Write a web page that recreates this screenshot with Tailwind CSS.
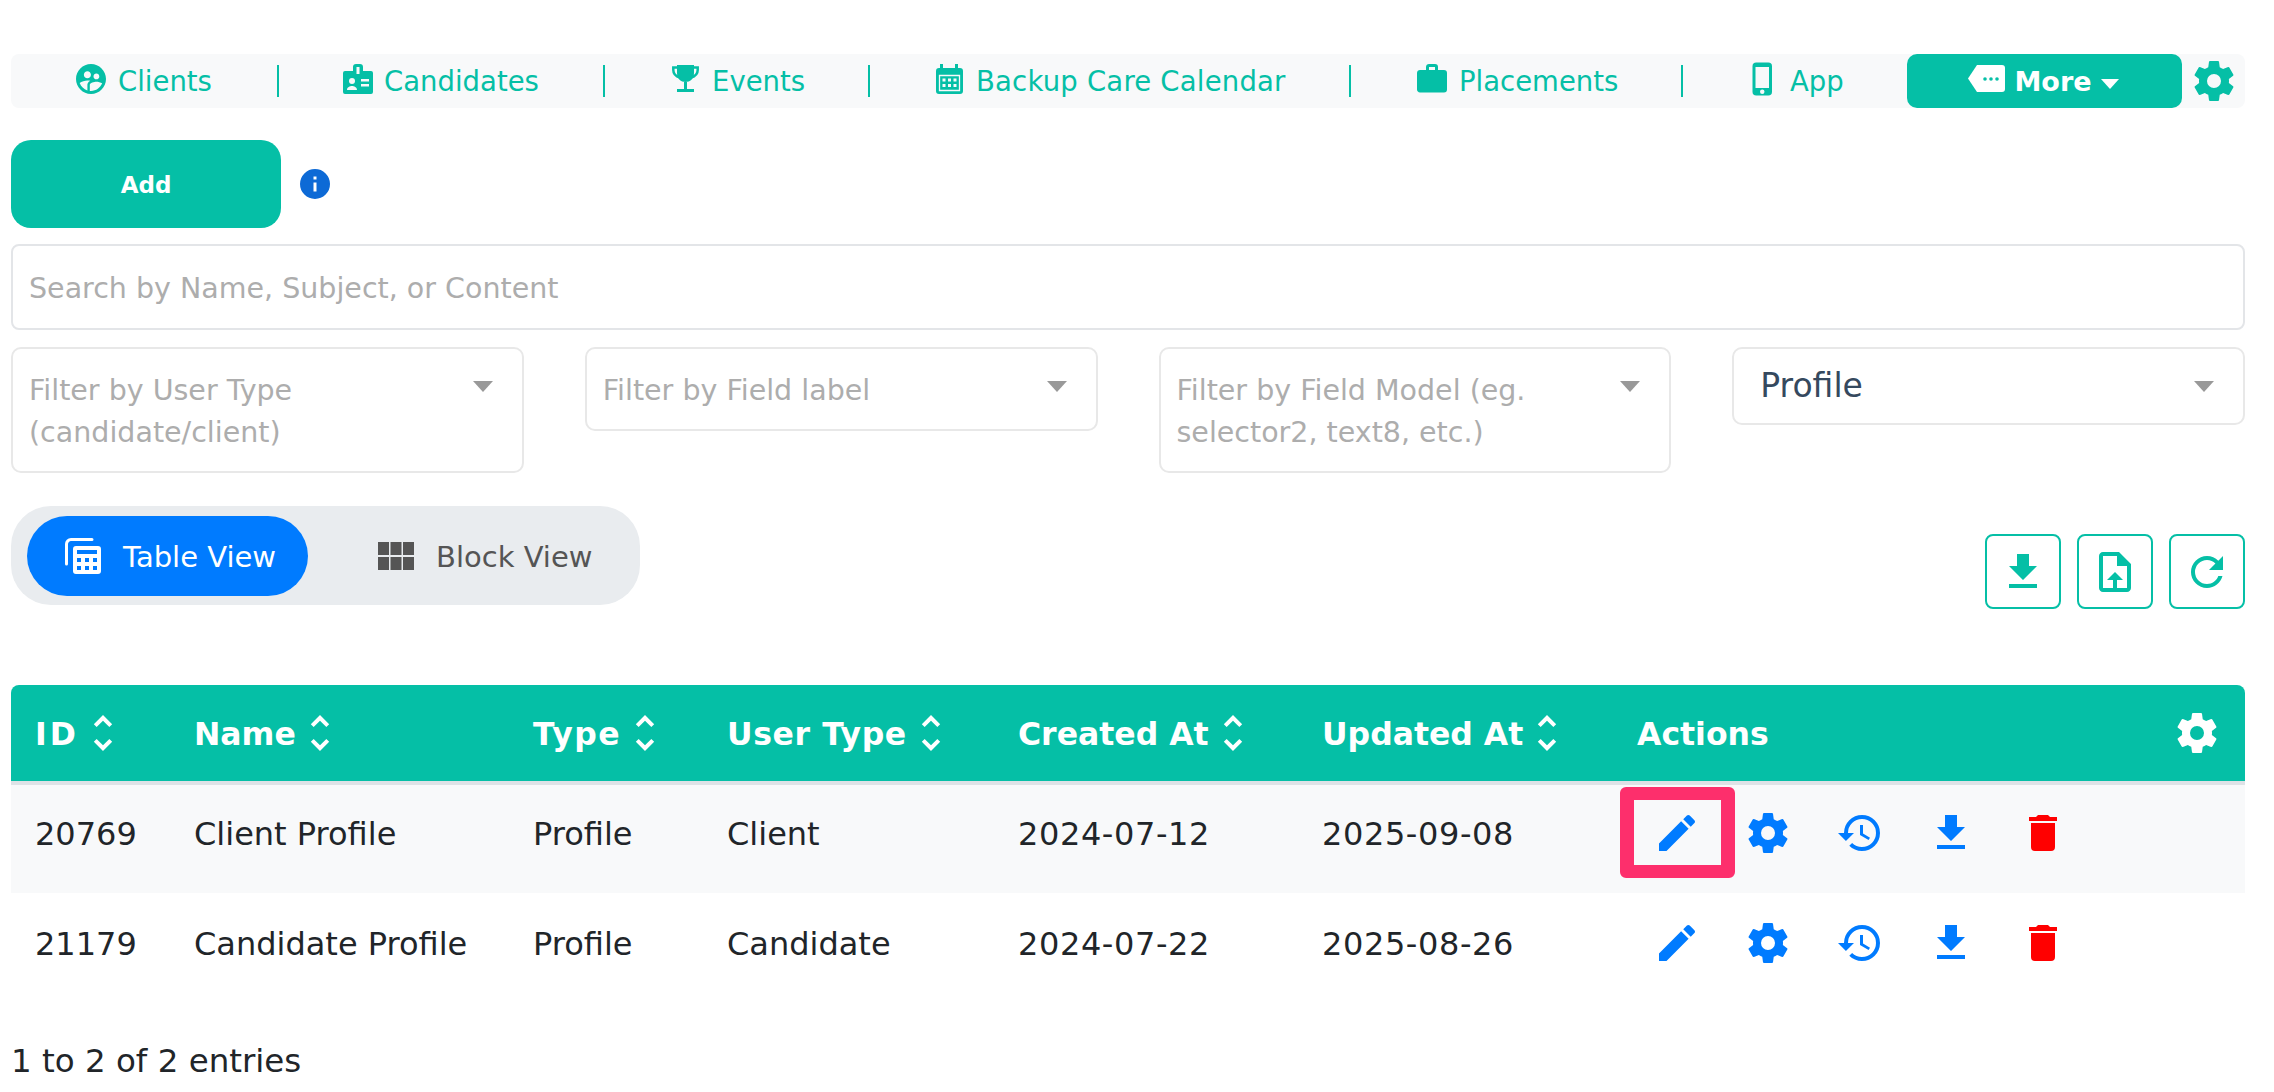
<!DOCTYPE html>
<html lang="en">
<head>
    <meta charset="UTF-8">
    <meta name="viewport" content="width=device-width, initial-scale=1.0">
    <title>Custom Fields</title>
    <script src="https://cdn.jsdelivr.net/npm/@tailwindcss/browser@4"></script>
</head>
<body class="bg-white font-['DejaVu_Sans',sans-serif] text-[#212529] overflow-hidden">
<div class="pt-[54px] pl-[11px] pr-[29px]">

    <!-- Top nav -->
    <nav class="flex items-center h-[54px] bg-[#f8f9fa] rounded-lg text-[#05bfa6] text-[27.500px]">
        <a class="flex items-center gap-[9px] w-[268px] h-[32px] pl-[62px] border-r-2 border-[#05bfa6]">
            <svg class="w-[36px] h-[36px] -mt-[4px] fill-current" viewBox="0 0 24 24"><path d="M12,2C6.47,2 2,6.5 2,12C2,17.5 6.5,22 12,22C17.5,22 22,17.5 22,12C22,6.5 17.5,2 12,2M15.6,8.34C16.67,8.34 17.53,9.2 17.53,10.27C17.53,11.34 16.67,12.2 15.6,12.2C14.53,12.2 13.67,11.34 13.67,10.27C13.67,9.2 14.53,8.34 15.6,8.34M9.6,6.76C10.9,6.76 11.96,7.82 11.96,9.12C11.96,10.42 10.9,11.5 9.6,11.5C8.3,11.5 7.24,10.42 7.24,9.12C7.24,7.81 8.29,6.76 9.6,6.76M9.6,15.89V19.64C7.2,18.89 5.3,17.04 4.46,14.68C5.5,13.56 8.13,13 9.6,13C10.13,13 10.8,13.08 11.5,13.22C9.86,14.09 9.6,15.24 9.6,15.89M12,20C11.73,20 11.47,20 11.2,19.96V15.89C11.2,14.47 14.14,13.76 15.6,13.76C16.67,13.76 18.5,14.15 19.44,14.91C18.27,17.88 15.38,20 12,20Z"/></svg>
            <span class="mt-[2px]">Clients</span>
        </a>
        <a class="flex items-center gap-[8px] w-[326px] h-[32px] pl-[61px] border-r-2 border-[#05bfa6]">
            <svg class="w-[36px] h-[36px] -mt-[4px]" viewBox="0 0 36 36"><path fill="currentColor" d="M5 10H13V6a3 3 0 0 1 3-3h4a3 3 0 0 1 3 3v4h8a2 2 0 0 1 2 2v19a2 2 0 0 1-2 2H5a2 2 0 0 1-2-2V12a2 2 0 0 1 2-2Z"/><path fill="#f8f9fa" d="M16.5 6h3v7h-3z"/><circle fill="#f8f9fa" cx="12" cy="20" r="3"/><path fill="#f8f9fa" d="M7 29c0-3 3-4 5-4s5 1 5 4zM21 18h8v2.500h-8zM21 23h8v2.500h-8z"/></svg>
            <span class="mt-[2px]">Candidates</span>
        </a>
        <a class="flex items-center gap-[9px] w-[265px] h-[32px] pl-[62px] border-r-2 border-[#05bfa6]">
            <svg class="w-[36px] h-[36px] -mt-[4px]" viewBox="0 0 36 36"><path fill="currentColor" d="M10 4H27V12c0 6-4 9-8.500 9S10 18 10 12ZM17 20h3v8h-3zM10 28h17v3H10z"/><path fill="none" stroke="currentColor" stroke-width="2.500" d="M10 6.500H6.300V9c0 4 3 6.500 6.700 7.500M27 6.500h3.700V9c0 4-3 6.500-6.700 7.500"/></svg>
            <span class="mt-[2px]">Events</span>
        </a>
        <a class="flex items-center gap-[8px] w-[481px] h-[32px] pl-[62px] border-r-2 border-[#05bfa6]">
            <svg class="w-[36px] h-[36px] -mt-[4px]" viewBox="0 0 36 36"><path fill="currentColor" d="M8 3h3v4h12V3h3v4h2a3 3 0 0 1 3 3v20a3 3 0 0 1-3 3H7a3 3 0 0 1-3-3V10a3 3 0 0 1 3-3h1Z"/><path fill="none" stroke="#f8f9fa" stroke-width="1.300" d="M7.500 14.500h20v15h-20z"/><path fill="#f8f9fa" d="M10.500 17.500h3v3h-3zM16 17.500h3v3h-3zM21.500 17.500h3v3h-3zM10.500 23h3v3h-3zM16 23h3v3h-3zM21.500 23h3v3h-3z"/></svg>
            <span class="mt-[2px] tracking-[.2px]">Backup Care Calendar</span>
        </a>
        <a class="flex items-center gap-[9px] w-[332px] h-[32px] pl-[63px] border-r-2 border-[#05bfa6]">
            <svg class="w-[36px] h-[36px] -mt-[4px] fill-current" viewBox="0 0 24 24"><path d="M10,2H14A2,2 0 0,1 16,4V6H20A2,2 0 0,1 22,8V19A2,2 0 0,1 20,21H4C2.89,21 2,20.1 2,19V8C2,6.89 2.89,6 4,6H8V4C8,2.89 8.89,2 10,2M14,6V4H10V6H14Z"/></svg>
            <span class="mt-[2px]">Placements</span>
        </a>
        <a class="flex items-center gap-[9px] w-[224px] h-[32px] pl-[62px]">
            <svg class="w-[36px] h-[36px] -mt-[4px] fill-current" viewBox="0 0 24 24"><path d="M16,18H7V4H16M11.500,22A1.500,1.500 0 0,1 10,20.500A1.500,1.500 0 0,1 11.500,19A1.500,1.500 0 0,1 13,20.500A1.500,1.500 0 0,1 11.500,22M15.500,1H7.500A2.500,2.500 0 0,0 5,3.500V20.500A2.500,2.500 0 0,0 7.500,23H15.500A2.500,2.500 0 0,0 18,20.500V3.500A2.500,2.500 0 0,0 15.500,1Z"/></svg>
            <span class="mt-[2px]">App</span>
        </a>
        <button class="flex items-center justify-center w-[275px] h-[54px] pr-[2px] bg-[#05bfa6] rounded-[10px] text-white font-bold text-[27px]">
            <svg class="w-[37px] h-[27px] mr-[9px] -mt-[6px]" viewBox="0 0 37 27"><path fill="#fff" d="M9 0H34a3 3 0 0 1 3 3V24a3 3 0 0 1-3 3H9L0 13.500Z"/><circle fill="#05bfa6" cx="17" cy="14" r="1.800"/><circle fill="#05bfa6" cx="23" cy="14" r="1.800"/><circle fill="#05bfa6" cx="29" cy="14" r="1.800"/></svg>
            <span class="mt-[2px]">More</span>
            <span class="ml-[9px] mt-[5px] w-0 h-0 border-x-[9px] border-t-[10px] border-x-transparent border-t-white"></span>
        </button>
        <svg class="w-[48px] h-[48px] ml-[8px] fill-current" viewBox="0 0 24 24"><path d="M12,15.500A3.500,3.500 0 0,1 8.500,12A3.500,3.500 0 0,1 12,8.500A3.500,3.500 0 0,1 15.500,12A3.500,3.500 0 0,1 12,15.500M19.430,12.970C19.470,12.650 19.500,12.330 19.500,12C19.500,11.670 19.470,11.340 19.430,11L21.540,9.370C21.730,9.220 21.780,8.950 21.660,8.730L19.660,5.270C19.540,5.050 19.270,4.960 19.050,5.050L16.560,6.050C16.040,5.660 15.500,5.320 14.870,5.070L14.500,2.420C14.460,2.180 14.250,2 14,2H10C9.750,2 9.540,2.180 9.500,2.420L9.130,5.070C8.500,5.320 7.960,5.660 7.440,6.050L4.950,5.050C4.730,4.960 4.460,5.050 4.340,5.270L2.340,8.730C2.210,8.950 2.270,9.220 2.460,9.370L4.570,11C4.530,11.340 4.500,11.670 4.500,12C4.500,12.330 4.530,12.650 4.570,12.970L2.460,14.630C2.270,14.780 2.210,15.050 2.340,15.270L4.340,18.730C4.460,18.950 4.730,19.030 4.950,18.950L7.440,17.940C7.960,18.340 8.500,18.680 9.130,18.930L9.500,21.580C9.540,21.820 9.750,22 10,22H14C14.250,22 14.460,21.820 14.500,21.580L14.870,18.930C15.500,18.670 16.040,18.340 16.560,17.940L19.050,18.950C19.270,19.030 19.540,18.950 19.660,18.730L21.660,15.270C21.780,15.050 21.730,14.780 21.540,14.630L19.430,12.970Z"/></svg>
    </nav>

    <!-- Add -->
    <div class="flex items-center mt-[32px]">
        <button class="w-[270px] h-[88px] pt-[2px] bg-[#05bfa6] rounded-[20px] text-white font-bold text-[23px]">Add</button>
        <svg class="w-[36px] h-[36px] ml-[16px] fill-[#0d6ad6]" viewBox="0 0 24 24"><path d="M13,9H11V7H13M13,17H11V11H13M12,2A10,10 0 0,0 2,12A10,10 0 0,0 12,22A10,10 0 0,0 22,12A10,10 0 0,0 12,2Z"/></svg>
    </div>

    <!-- Search -->
    <input type="text" placeholder="Search by Name, Subject, or Content" class="block w-full h-[86px] mt-[16px] pt-[3px] px-[16px] border-2 border-[#e3e5e8] rounded-lg text-[28.500px] placeholder:text-[#adadad]">

    <!-- Filters -->
    <div class="grid grid-cols-4 gap-x-[61px] items-start mt-[17px] text-[28.500px] leading-[42px] text-[#adadad]">
        <div class="flex justify-between h-[126px] pt-[21px] pl-[16px] pr-[29px] border-2 border-[#e8e8e8] rounded-[10px]">
            <span>Filter by User Type<br>(candidate/client)</span>
            <span class="mt-[11px] w-0 h-0 border-x-[10px] border-t-[11px] border-x-transparent border-t-[#999]"></span>
        </div>
        <div class="flex justify-between h-[84px] pt-[21px] pl-[16px] pr-[29px] border-2 border-[#e8e8e8] rounded-[10px]">
            <span>Filter by Field label</span>
            <span class="mt-[11px] w-0 h-0 border-x-[10px] border-t-[11px] border-x-transparent border-t-[#999]"></span>
        </div>
        <div class="flex justify-between h-[126px] pt-[21px] pl-[16px] pr-[29px] border-2 border-[#e8e8e8] rounded-[10px]">
            <span>Filter by Field Model (eg.<br>selector2, text8, etc.)</span>
            <span class="mt-[11px] w-0 h-0 border-x-[10px] border-t-[11px] border-x-transparent border-t-[#999]"></span>
        </div>
        <div class="flex justify-between h-[78px] pt-[16px] pl-[26px] pr-[29px] border-2 border-[#e8e8e8] rounded-[10px]">
            <span class="text-[33px] text-[#35495e]">Profile</span>
            <span class="mt-[16px] w-0 h-0 border-x-[10px] border-t-[11px] border-x-transparent border-t-[#999]"></span>
        </div>
    </div>

    <!-- View toggle + tools -->
    <div class="flex justify-between items-start mt-[33px]">
        <div class="flex items-center w-[629px] h-[99px] px-[16px] bg-[#e9ecef] rounded-[40px] text-[29px]">
            <button class="flex items-center gap-[22px] w-[281px] h-[80px] pl-[38px] bg-[#007bff] rounded-[40px] text-white">
                <svg class="w-[36px] h-[36px]" viewBox="0 0 36 36"><path fill="none" stroke="#fff" stroke-width="3" stroke-linecap="round" d="M27 1.500H6A4.500 4.500 0 0 0 1.500 6V26"/><path fill="#fff" fill-rule="evenodd" d="M11 8H33a3 3 0 0 1 3 3V33a3 3 0 0 1-3 3H11a3 3 0 0 1-3-3V11a3 3 0 0 1 3-3ZM12 12V16H32V12ZM12 20V24H16V20ZM20 20V24H24V20ZM28 20V24H32V20ZM12 28V32H16V28ZM20 28V32H24V28ZM28 28V32H32V28Z"/></svg>
                <span class="mt-[4px]">Table View</span>
            </button>
            <button class="flex items-center gap-[23px] ml-[70px] text-[#555]">
                <svg class="w-[36px] h-[28px] fill-[#555]" viewBox="0 0 36 28"><path d="M0 0h11v13H0zM12.500 0h11v13h-11zM25 0h11v13H25zM0 15h11v13H0zM12.500 15h11v13h-11zM25 15h11v13H25z"/></svg>
                <span class="mt-[4px] -ml-[1px]">Block View</span>
            </button>
        </div>
        <div class="flex gap-[16px] mt-[28px] text-[#05bfa6]">
            <button class="flex items-center justify-center w-[76px] h-[75px] border-2 border-[#05bfa6] rounded-lg">
                <svg class="w-[48px] h-[48px] fill-current" viewBox="0 0 24 24"><path d="M5,20H19V18H5M19,9H15V3H9V9H5L12,16L19,9Z"/></svg>
            </button>
            <button class="flex items-center justify-center w-[76px] h-[75px] border-2 border-[#05bfa6] rounded-lg">
                <svg class="w-[48px] h-[48px] fill-current" viewBox="0 0 24 24"><path d="M14,2H6C4.900,2 4,2.900 4,4V20C4,21.100 4.900,22 6,22H18C19.100,22 20,21.100 20,20V8L14,2M18,20H6V4H13V9H18V20M12,12L8,16H11V20H13V16H16L12,12Z"/></svg>
            </button>
            <button class="flex items-center justify-center w-[76px] h-[75px] border-2 border-[#05bfa6] rounded-lg">
                <svg class="w-[48px] h-[48px] fill-current" viewBox="0 0 24 24"><path d="M17.650,6.350C16.200,4.900 14.210,4 12,4A8,8 0 0,0 4,12A8,8 0 0,0 12,20C15.730,20 18.840,17.450 19.730,14H17.650C16.830,16.330 14.610,18 12,18A6,6 0 0,1 6,12A6,6 0 0,1 12,6C13.660,6 15.140,6.690 16.220,7.780L13,11H20V4L17.650,6.350Z"/></svg>
            </button>
        </div>
    </div>

    <!-- Table -->
    <table class="w-full table-fixed border-separate border-spacing-0 mt-[76px] text-[32px] text-left">
        <colgroup>
            <col class="w-[159px]"><col class="w-[339px]"><col class="w-[194px]"><col class="w-[291px]"><col class="w-[304px]"><col class="w-[315px]"><col>
        </colgroup>
        <thead class="bg-[#05bfa6] text-white text-[31.500px]">
            <tr class="h-[100px]">
                <th class="pl-[24px] border-b-4 border-[#dee2e6] rounded-tl-lg font-bold"><span class="flex items-center"><span class="mt-[3px] tracking-[3px]">ID</span><svg class="w-[48px] h-[48px] fill-white" viewBox="0 0 24 24"><path d="M12,18.170L8.830,15L7.410,16.410L12,21L16.590,16.410L15.170,15M12,5.830L15.170,9L16.580,7.590L12,3L7.410,7.590L8.830,9L12,5.830Z"/></svg></span></th>
                <th class="pl-[24px] border-b-4 border-[#dee2e6] font-bold"><span class="flex items-center"><span class="mt-[3px]">Name</span><svg class="w-[48px] h-[48px] fill-white" viewBox="0 0 24 24"><path d="M12,18.170L8.830,15L7.410,16.410L12,21L16.590,16.410L15.170,15M12,5.830L15.170,9L16.580,7.590L12,3L7.410,7.590L8.830,9L12,5.830Z"/></svg></span></th>
                <th class="pl-[24px] border-b-4 border-[#dee2e6] font-bold"><span class="flex items-center"><span class="mt-[3px] tracking-[1.500px]">Type</span><svg class="w-[48px] h-[48px] fill-white" viewBox="0 0 24 24"><path d="M12,18.170L8.830,15L7.410,16.410L12,21L16.590,16.410L15.170,15M12,5.830L15.170,9L16.580,7.590L12,3L7.410,7.590L8.830,9L12,5.830Z"/></svg></span></th>
                <th class="pl-[24px] border-b-4 border-[#dee2e6] font-bold"><span class="flex items-center"><span class="mt-[3px] tracking-[.6px]">User Type</span><svg class="w-[48px] h-[48px] fill-white" viewBox="0 0 24 24"><path d="M12,18.170L8.830,15L7.410,16.410L12,21L16.590,16.410L15.170,15M12,5.830L15.170,9L16.580,7.590L12,3L7.410,7.590L8.830,9L12,5.830Z"/></svg></span></th>
                <th class="pl-[24px] border-b-4 border-[#dee2e6] font-bold"><span class="flex items-center"><span class="mt-[3px]">Created At</span><svg class="w-[48px] h-[48px] fill-white" viewBox="0 0 24 24"><path d="M12,18.170L8.830,15L7.410,16.410L12,21L16.590,16.410L15.170,15M12,5.830L15.170,9L16.580,7.590L12,3L7.410,7.590L8.830,9L12,5.830Z"/></svg></span></th>
                <th class="pl-[24px] border-b-4 border-[#dee2e6] font-bold"><span class="flex items-center"><span class="mt-[3px]">Updated At</span><svg class="w-[48px] h-[48px] fill-white" viewBox="0 0 24 24"><path d="M12,18.170L8.830,15L7.410,16.410L12,21L16.590,16.410L15.170,15M12,5.830L15.170,9L16.580,7.590L12,3L7.410,7.590L8.830,9L12,5.830Z"/></svg></span></th>
                <th class="pl-[24px] pr-[24px] border-b-4 border-[#dee2e6] rounded-tr-lg font-bold"><span class="flex items-center justify-between"><span class="mt-[3px]">Actions</span><svg class="w-[48px] h-[48px] fill-white" viewBox="0 0 24 24"><path d="M12,15.500A3.500,3.500 0 0,1 8.500,12A3.500,3.500 0 0,1 12,8.500A3.500,3.500 0 0,1 15.500,12A3.500,3.500 0 0,1 12,15.500M19.430,12.970C19.470,12.650 19.500,12.330 19.500,12C19.500,11.670 19.470,11.340 19.430,11L21.540,9.370C21.730,9.220 21.780,8.950 21.660,8.730L19.660,5.270C19.540,5.050 19.270,4.960 19.050,5.050L16.560,6.050C16.040,5.660 15.500,5.320 14.870,5.070L14.500,2.420C14.460,2.180 14.250,2 14,2H10C9.750,2 9.540,2.180 9.500,2.420L9.130,5.070C8.500,5.320 7.960,5.660 7.440,6.050L4.950,5.050C4.730,4.960 4.460,5.050 4.340,5.270L2.340,8.730C2.210,8.950 2.270,9.220 2.460,9.370L4.570,11C4.530,11.340 4.500,11.670 4.500,12C4.500,12.330 4.530,12.650 4.570,12.970L2.460,14.630C2.270,14.780 2.210,15.050 2.340,15.270L4.340,18.730C4.460,18.950 4.730,19.030 4.950,18.950L7.440,17.940C7.960,18.340 8.500,18.680 9.130,18.930L9.500,21.580C9.540,21.820 9.750,22 10,22H14C14.250,22 14.460,21.820 14.500,21.580L14.870,18.930C15.500,18.670 16.040,18.340 16.560,17.940L19.050,18.950C19.270,19.030 19.540,18.950 19.660,18.730L21.660,15.270C21.780,15.050 21.730,14.780 21.540,14.630L19.430,12.970Z"/></svg></span></th>
            </tr>
        </thead>
        <tbody class="leading-[48px]">
            <tr class="h-[108px] bg-[#f8f9fa] align-top">
                <td class="pl-[24px] pt-[25px]">20769</td>
                <td class="pl-[24px] pt-[25px]">Client Profile</td>
                <td class="pl-[24px] pt-[25px]">Profile</td>
                <td class="pl-[24px] pt-[25px]">Client</td>
                <td class="pl-[24px] pt-[25px] tracking-[.6px]">2024-07-12</td>
                <td class="pl-[24px] pt-[25px] tracking-[.6px]">2025-09-08</td>
                <td class="pl-[39.500px] pt-[24px]">
                    <div class="flex gap-[43.500px]">
                        <span class="relative w-[48px] h-[48px]">
                            <svg class="w-[48px] h-[48px] fill-[#007bff]" viewBox="0 0 24 24"><path d="M20.710,7.040C21.100,6.650 21.100,6 20.710,5.630L18.370,3.290C18,2.900 17.350,2.900 16.960,3.290L15.120,5.120L18.870,8.870M3,17.250V21H6.750L17.810,9.930L14.060,6.180L3,17.250Z"/></svg>
                            <span class="absolute -left-[33px] -top-[22px] w-[115px] h-[91px] border-x-[14px] border-y-[13px] border-[#fd2f6c] rounded-md"></span>
                        </span>
                        <svg class="w-[48px] h-[48px] fill-[#007bff]" viewBox="0 0 24 24"><path d="M12,15.500A3.500,3.500 0 0,1 8.500,12A3.500,3.500 0 0,1 12,8.500A3.500,3.500 0 0,1 15.500,12A3.500,3.500 0 0,1 12,15.500M19.430,12.970C19.470,12.650 19.500,12.330 19.500,12C19.500,11.670 19.470,11.340 19.430,11L21.540,9.370C21.730,9.220 21.780,8.950 21.660,8.730L19.660,5.270C19.540,5.050 19.270,4.960 19.050,5.050L16.560,6.050C16.040,5.660 15.500,5.320 14.870,5.070L14.500,2.420C14.460,2.180 14.250,2 14,2H10C9.750,2 9.540,2.180 9.500,2.420L9.130,5.070C8.500,5.320 7.960,5.660 7.440,6.050L4.950,5.050C4.730,4.960 4.460,5.050 4.340,5.270L2.340,8.730C2.210,8.950 2.270,9.220 2.460,9.370L4.570,11C4.530,11.340 4.500,11.670 4.500,12C4.500,12.330 4.530,12.650 4.570,12.970L2.460,14.630C2.270,14.780 2.210,15.050 2.340,15.270L4.340,18.730C4.460,18.950 4.730,19.030 4.950,18.950L7.440,17.940C7.960,18.340 8.500,18.680 9.130,18.930L9.500,21.580C9.540,21.820 9.750,22 10,22H14C14.250,22 14.460,21.820 14.500,21.580L14.870,18.930C15.500,18.670 16.040,18.340 16.560,17.940L19.050,18.950C19.270,19.030 19.540,18.950 19.660,18.730L21.660,15.270C21.780,15.050 21.730,14.780 21.540,14.630L19.430,12.970Z"/></svg>
                        <svg class="w-[48px] h-[48px] fill-[#007bff]" viewBox="0 0 24 24"><path d="M13.500,8H12V13L16.280,15.540L17,14.330L13.500,12.250V8M13,3A9,9 0 0,0 4,12H1L4.960,16.030L9,12H6A7,7 0 0,1 13,5A7,7 0 0,1 20,12A7,7 0 0,1 13,19C11.070,19 9.320,18.210 8.060,16.940L6.640,18.360C8.270,20 10.500,21 13,21A9,9 0 0,0 22,12A9,9 0 0,0 13,3"/></svg>
                        <svg class="w-[48px] h-[48px] fill-[#007bff]" viewBox="0 0 24 24"><path d="M5,20H19V18H5M19,9H15V3H9V9H5L12,16L19,9Z"/></svg>
                        <svg class="w-[48px] h-[48px] fill-[#ff0000]" viewBox="0 0 24 24"><path d="M19,4H15.500L14.500,3H9.500L8.500,4H5V6H19M6,19A2,2 0 0,0 8,21H16A2,2 0 0,0 18,19V7H6V19Z"/></svg>
                    </div>
                </td>
            </tr>
            <tr class="h-[108px] align-top">
                <td class="pl-[24px] pt-[27px]">21179</td>
                <td class="pl-[24px] pt-[27px]">Candidate Profile</td>
                <td class="pl-[24px] pt-[27px]">Profile</td>
                <td class="pl-[24px] pt-[27px]">Candidate</td>
                <td class="pl-[24px] pt-[27px] tracking-[.6px]">2024-07-22</td>
                <td class="pl-[24px] pt-[27px] tracking-[.6px]">2025-08-26</td>
                <td class="pl-[39.500px] pt-[26px]">
                    <div class="flex gap-[43.500px]">
                        <svg class="w-[48px] h-[48px] fill-[#007bff]" viewBox="0 0 24 24"><path d="M20.710,7.040C21.100,6.650 21.100,6 20.710,5.630L18.370,3.290C18,2.900 17.350,2.900 16.960,3.290L15.120,5.120L18.870,8.870M3,17.250V21H6.750L17.810,9.930L14.060,6.180L3,17.250Z"/></svg>
                        <svg class="w-[48px] h-[48px] fill-[#007bff]" viewBox="0 0 24 24"><path d="M12,15.500A3.500,3.500 0 0,1 8.500,12A3.500,3.500 0 0,1 12,8.500A3.500,3.500 0 0,1 15.500,12A3.500,3.500 0 0,1 12,15.500M19.430,12.970C19.470,12.650 19.500,12.330 19.500,12C19.500,11.670 19.470,11.340 19.430,11L21.540,9.370C21.730,9.220 21.780,8.950 21.660,8.730L19.660,5.270C19.540,5.050 19.270,4.960 19.050,5.050L16.560,6.050C16.040,5.660 15.500,5.320 14.870,5.070L14.500,2.420C14.460,2.180 14.250,2 14,2H10C9.750,2 9.540,2.180 9.500,2.420L9.130,5.070C8.500,5.320 7.960,5.660 7.440,6.050L4.950,5.050C4.730,4.960 4.460,5.050 4.340,5.270L2.340,8.730C2.210,8.950 2.270,9.220 2.460,9.370L4.570,11C4.530,11.340 4.500,11.670 4.500,12C4.500,12.330 4.530,12.650 4.570,12.970L2.460,14.630C2.270,14.780 2.210,15.050 2.340,15.270L4.340,18.730C4.460,18.950 4.730,19.030 4.950,18.950L7.440,17.940C7.960,18.340 8.500,18.680 9.130,18.930L9.500,21.580C9.540,21.820 9.750,22 10,22H14C14.250,22 14.460,21.820 14.500,21.580L14.870,18.930C15.500,18.670 16.040,18.340 16.560,17.940L19.050,18.950C19.270,19.030 19.540,18.950 19.660,18.730L21.660,15.270C21.780,15.050 21.730,14.780 21.540,14.630L19.430,12.970Z"/></svg>
                        <svg class="w-[48px] h-[48px] fill-[#007bff]" viewBox="0 0 24 24"><path d="M13.500,8H12V13L16.280,15.540L17,14.330L13.500,12.250V8M13,3A9,9 0 0,0 4,12H1L4.960,16.030L9,12H6A7,7 0 0,1 13,5A7,7 0 0,1 20,12A7,7 0 0,1 13,19C11.070,19 9.320,18.210 8.060,16.940L6.640,18.360C8.270,20 10.500,21 13,21A9,9 0 0,0 22,12A9,9 0 0,0 13,3"/></svg>
                        <svg class="w-[48px] h-[48px] fill-[#007bff]" viewBox="0 0 24 24"><path d="M5,20H19V18H5M19,9H15V3H9V9H5L12,16L19,9Z"/></svg>
                        <svg class="w-[48px] h-[48px] fill-[#ff0000]" viewBox="0 0 24 24"><path d="M19,4H15.500L14.500,3H9.500L8.500,4H5V6H19M6,19A2,2 0 0,0 8,21H16A2,2 0 0,0 18,19V7H6V19Z"/></svg>
                    </div>
                </td>
            </tr>
        </tbody>
    </table>

    <p class="mt-[39px] text-[32.500px] leading-[42px]">1 to 2 of 2 entries</p>
</div>
</body>
</html>
